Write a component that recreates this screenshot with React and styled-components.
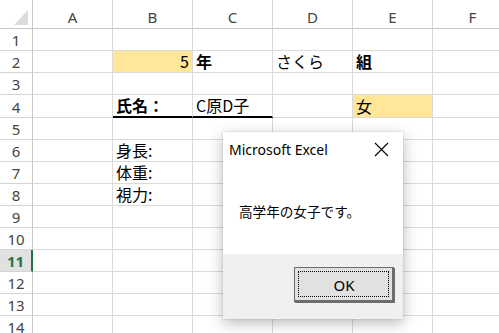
import React from 'react';
import styled, { createGlobalStyle } from 'styled-components';

const GlobalStyle = createGlobalStyle`
  html, body {
    margin: 0;
    padding: 0;
    background: #fff;
    overflow: hidden;
  }
`;

const Screen = styled.div`
  position: relative;
  width: 499px;
  height: 333px;
  overflow: hidden;
  background: #fff;
`;

const Sheet = styled.div`
  display: grid;
  grid-template-columns: 33px repeat(6, 80px);
  grid-template-rows: 29px repeat(3, 22px) 23px repeat(10, 22px);
`;

const Corner = styled.div`
  position: relative;
  border-right: 1px solid #c8c8c8;
  border-bottom: 1px solid #c8c8c8;
  box-sizing: border-box;

  &::after {
    content: '';
    position: absolute;
    right: 4px;
    bottom: 3px;
    width: 0;
    height: 0;
    border-left: 14px solid transparent;
    border-bottom: 15px solid #dcdcdc;
  }
`;

const ColHeader = styled.div`
  display: flex;
  align-items: flex-end;
  justify-content: center;
  padding-bottom: 1px;
  box-sizing: border-box;
  border-right: 1px solid #d4d4d4;
  border-bottom: 1px solid #c8c8c8;
  font-family: "Noto Sans", "Open Sans", sans-serif;
  font-size: 15px;
  color: #444;
`;

const RowHeader = styled.div`
  display: flex;
  align-items: flex-end;
  justify-content: center;
  box-sizing: border-box;
  border-bottom: 1px solid #d4d4d4;
  border-right: ${(p) => (p.$active ? '2px solid #217346' : '1px solid #c8c8c8')};
  background: ${(p) => (p.$active ? '#e1e1e1' : '#fff')};
  color: ${(p) => (p.$active ? '#217346' : '#444')};
  font-weight: ${(p) => (p.$active ? 700 : 400)};
  font-family: "Noto Sans", "Open Sans", sans-serif;
  font-size: 15px;
  line-height: 20px;
`;

const Cell = styled.div`
  display: flex;
  align-items: flex-end;
  justify-content: ${(p) => (p.$right ? 'flex-end' : 'flex-start')};
  padding: 0 ${(p) => (p.$right ? '3px' : '0')} 1px 3px;
  box-sizing: border-box;
  border-right: 1px solid #dadada;
  border-bottom: ${(p) => (p.$underline ? '2px solid #000' : '1px solid #dadada')};
  background: ${(p) => p.$fill || 'transparent'};
  font-family: "Noto Sans CJK JP", sans-serif;
  font-size: 16px;
  line-height: 19px;
  font-weight: ${(p) => (p.$bold ? 700 : 400)};
  color: #000;
  white-space: nowrap;
`;

const Dialog = styled.div`
  position: absolute;
  left: 223px;
  top: 132px;
  width: 180px;
  height: 187px;
  display: flex;
  flex-direction: column;
  background: #fff;
  box-shadow: 0 4px 14px rgba(0, 0, 0, 0.28), 0 0 2px rgba(0, 0, 0, 0.15);
`;

const TitleBar = styled.div`
  height: 34px;
  display: flex;
  align-items: center;
  justify-content: space-between;
  padding: 0 14px 0 6px;
  font-family: "Noto Sans", "Open Sans", sans-serif;
  font-size: 14px;
  color: #000;
`;

const CloseIcon = styled.svg`
  width: 15px;
  height: 15px;
`;

const Body = styled.div`
  flex: 1;
  display: flex;
  align-items: center;
  padding: 2px 0 0 16px;
  font-family: "Noto Sans CJK JP", sans-serif;
  font-size: 13.6px;
  color: #000;
`;

const Footer = styled.div`
  height: 65px;
  display: flex;
  justify-content: flex-end;
  align-items: flex-start;
  padding: 13px 9px 0 0;
  box-sizing: border-box;
  background: #f0f0f0;
`;

const OkButton = styled.button`
  position: relative;
  width: 100px;
  height: 35px;
  background: #e1e1e1;
  border: 1px solid #6d6d6d;
  box-shadow: inset -1px -1px 0 #6d6d6d, 1px 1px 0 #6d6d6d;
  font-family: "Noto Sans", "Open Sans", sans-serif;
  font-size: 15px;
  color: #000;
  padding: 0;

  &::after {
    content: '';
    position: absolute;
    inset: 3px 4px 4px 3px;
    border: 1px dotted #000;
  }
`;

const columns = ['A', 'B', 'C', 'D', 'E', 'F'];
const YELLOW = '#ffe699';

const cells = {
  '2B': { text: '5', right: true, fill: YELLOW },
  '2C': { text: '年', bold: true },
  '2D': { text: 'さくら' },
  '2E': { text: '組', bold: true },
  '4B': { text: '氏名：', bold: true, underline: true },
  '4C': { text: 'C原D子', underline: true },
  '4E': { text: '女', fill: YELLOW },
  '6B': { text: '身長:' },
  '7B': { text: '体重:' },
  '8B': { text: '視力:' },
};

const rows = Array.from({ length: 14 }, (_, i) => i + 1);

export default function App() {
  return (
    <Screen>
      <GlobalStyle />
      <Sheet>
        <Corner />
        {columns.map((c) => (
          <ColHeader key={c}>{c}</ColHeader>
        ))}
        {rows.map((r) => (
          <React.Fragment key={r}>
            <RowHeader $active={r === 11}>{r}</RowHeader>
            {columns.map((c) => {
              const cell = cells[`${r}${c}`] || {};
              return (
                <Cell
                  key={c}
                  $right={cell.right}
                  $bold={cell.bold}
                  $fill={cell.fill}
                  $underline={cell.underline}
                >
                  {cell.text}
                </Cell>
              );
            })}
          </React.Fragment>
        ))}
      </Sheet>

      <Dialog>
        <TitleBar>
          <span>Microsoft Excel</span>
          <CloseIcon viewBox="0 0 15 15">
            <path d="M1 1 L14 14 M14 1 L1 14" stroke="#000" strokeWidth="1.1" fill="none" />
          </CloseIcon>
        </TitleBar>
        <Body>高学年の女子です。</Body>
        <Footer>
          <OkButton>OK</OkButton>
        </Footer>
      </Dialog>
    </Screen>
  );
}
